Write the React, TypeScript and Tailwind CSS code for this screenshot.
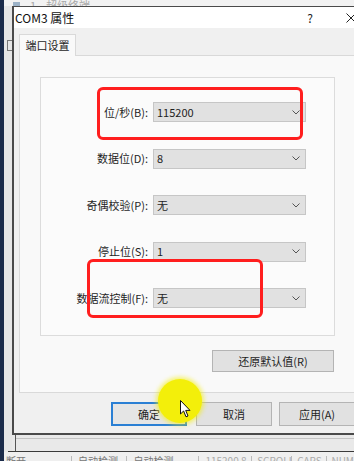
import React from 'react';

const font = { fontFamily: '"Noto Sans CJK SC", "Noto Sans", sans-serif' };

const Chevron: React.FC = () => (
  <svg width="8" height="5" viewBox="0 0 8 5" className="shrink-0">
    <polyline points="0.5,0.5 4,4 7.5,0.5" fill="none" stroke="#555" strokeWidth="1" />
  </svg>
);

const ComboRow: React.FC<{ label: string; value: string }> = ({ label, value }) => (
  <div className="grid grid-cols-[107px_153px] gap-[5px] items-center">
    <span className="text-right text-[11px] text-[#1e1e1e] leading-none">{label}</span>
    <div className="h-[20px] bg-[#e1e1e1] border border-[#c6c6c6] flex items-center justify-between pl-[3px] pr-[5px]">
      <span className="text-[11px] text-[#1e1e1e] leading-none">{value}</span>
      <Chevron />
    </div>
  </div>
);

const rows = [
  { label: '位/秒(B):', value: '115200' },
  { label: '数据位(D):', value: '8' },
  { label: '奇偶校验(P):', value: '无' },
  { label: '停止位(S):', value: '1' },
  { label: '数据流控制(F):', value: '无' },
];

export default function App() {
  return (
    <div style={font} className="relative w-[354px] h-[461px] overflow-hidden bg-[#e9e9e9] flex">
      {/* desktop edge */}
      <div className="w-[4px] shrink-0 bg-[#1b2b4a]" />

      <div className="flex-1 min-w-0 flex flex-col">
        {/* window behind, top */}
        <div className="h-[6px] shrink-0 overflow-hidden bg-[#f2f2f2] flex items-end gap-[10px] pl-[9px]">
          <div className="w-[7px] h-[4px] bg-[#9db3c8] shrink-0" />
          <span className="text-[11px] leading-none text-[#a8a8a8] -mb-[5px]">1</span>
          <span className="text-[11px] leading-none text-[#a8a8a8] -mb-[5px]">超级终端</span>
        </div>

        <div className="flex flex-1 min-h-0">
          {/* behind window gutter */}
          <div className="w-[8px] shrink-0 bg-[#e6e6e6] flex flex-col pt-[34px] pl-[3px]">
            <div className="w-[6px] h-[11px] border border-[#777] border-r-0" />
          </div>

          <div className="w-[350px] shrink-0 flex flex-col">
            {/* dialog */}
            <div className="border-l-2 border-t border-b-2 border-[#4a4a4a] flex flex-col">
              <div className="h-[21px] bg-white flex items-center pl-[1px]">
                <span className="text-[12px] text-[#111] leading-none">COM3 属性</span>
                <span className="ml-auto text-[12px] text-[#222] leading-none mr-[33px]">?</span>
                <svg width="10" height="10" viewBox="0 0 10 10" className="mr-[6px]">
                  <line x1="0.5" y1="0.5" x2="9.5" y2="9.5" stroke="#222" strokeWidth="1" />
                  <line x1="9.5" y1="0.5" x2="0.5" y2="9.5" stroke="#222" strokeWidth="1" />
                </svg>
              </div>

              <div className="bg-[#f0f0f0] pl-[5px] pt-[6px] pb-[7px] flex flex-col">
                <div className="w-[57px] h-[22px] bg-[#f9f9f9] border border-b-0 border-[#d9d9d9] flex items-center justify-center -mb-px relative">
                  <span className="text-[11px] text-[#1e1e1e] leading-none">端口设置</span>
                </div>
                <div className="h-[338px] bg-[#f9f9f9] border border-[#d9d9d9] pl-[20px] pt-[21px] flex flex-col">
                  <div className="w-[295px] h-[259px] border border-[#dcdcdc] bg-[#fbfbfb] pt-[24px] flex flex-col gap-[26.5px]">
                    {rows.map((r) => (
                      <ComboRow key={r.label} label={r.label} value={r.value} />
                    ))}
                  </div>
                  <div className="w-[295px] flex justify-end pr-[1px] mt-[14px]">
                    <div className="w-[122px] h-[22px] bg-[#e1e1e1] border border-[#b4b4b4] flex items-center justify-center">
                      <span className="text-[11px] text-[#1e1e1e] leading-none">还原默认值(R)</span>
                    </div>
                  </div>
                </div>

                <div className="flex mt-[9px] pl-[92px]">
                  <div className="w-[76px] h-[24px] bg-[#e5e5e5] border-2 border-[#2a7fd4] flex items-center justify-center">
                    <span className="text-[11px] text-[#1e1e1e] leading-none">确定</span>
                  </div>
                  <div className="w-[76px] h-[24px] ml-[9px] bg-[#e1e1e1] border border-[#b4b4b4] flex items-center justify-center">
                    <span className="text-[11px] text-[#1e1e1e] leading-none">取消</span>
                  </div>
                  <div className="w-[76px] h-[24px] ml-[7px] bg-[#e1e1e1] border border-[#b4b4b4] flex items-center justify-center">
                    <span className="text-[11px] text-[#1e1e1e] leading-none">应用(A)</span>
                  </div>
                </div>
              </div>
            </div>

            {/* window frame behind dialog */}
            <div className="h-[16px] bg-[#e9e9e9] flex flex-col pl-[3px]">
              <div className="flex-1 border-l border-[#555] flex flex-col pt-[3px]">
                <div className="h-px bg-[#c4c4c4]" />
              </div>
            </div>
          </div>
        </div>

        {/* status bar of the terminal window */}
        <div className="h-px bg-[#3a3a3a] ml-[4px]" />
        <div className="h-[9px] shrink-0 overflow-hidden bg-[#efefef] flex text-[10px] leading-none text-[#777] pt-[4px]">
          <span className="w-[73px] pl-[2px]">断开</span>
          <span className="w-[60px] border-l border-[#bbb] pl-[6px]">自动检测</span>
          <span className="w-[78px] border-l border-[#bbb] pl-[6px]">自动检测</span>
          <span className="w-[57px] border-l border-[#bbb] pl-[6px] text-[#aaa]">115200 8-N-1</span>
          <span className="w-[40px] border-l border-[#bbb] pl-[5px] text-[#aaa]">SCROLL</span>
          <span className="w-[38px] border-l border-[#bbb] pl-[5px] text-[#aaa]">CAPS</span>
          <span className="border-l border-[#bbb] pl-[4px] text-[#aaa]">NUM</span>
        </div>
      </div>

      {/* red highlight marks */}
      <div className="absolute left-[97px] top-[87px] w-[206px] h-[53px] border-[3px] border-[#ff1e1e] rounded-[6px]" />
      <div className="absolute left-[87px] top-[259px] w-[176px] h-[59px] border-[3px] border-[#ff1e1e] rounded-[6px]" />

      {/* cursor highlight */}
      <div className="absolute left-[158px] top-[379px] w-[44px] h-[44px] rounded-full bg-[#f3ef0a] shadow-[0_0_4px_2px_rgba(243,239,10,0.6)]" />
      <svg className="absolute left-[180px] top-[400px]" width="12" height="18" viewBox="0 0 12 18">
        <path d="M0.5,0.5 L0.5,14 L3.6,11 L6,16.8 L8,16 L5.7,10.4 L10,10.4 Z" fill="#fff" stroke="#111" strokeWidth="1" strokeLinejoin="round" />
      </svg>
    </div>
  );
}
